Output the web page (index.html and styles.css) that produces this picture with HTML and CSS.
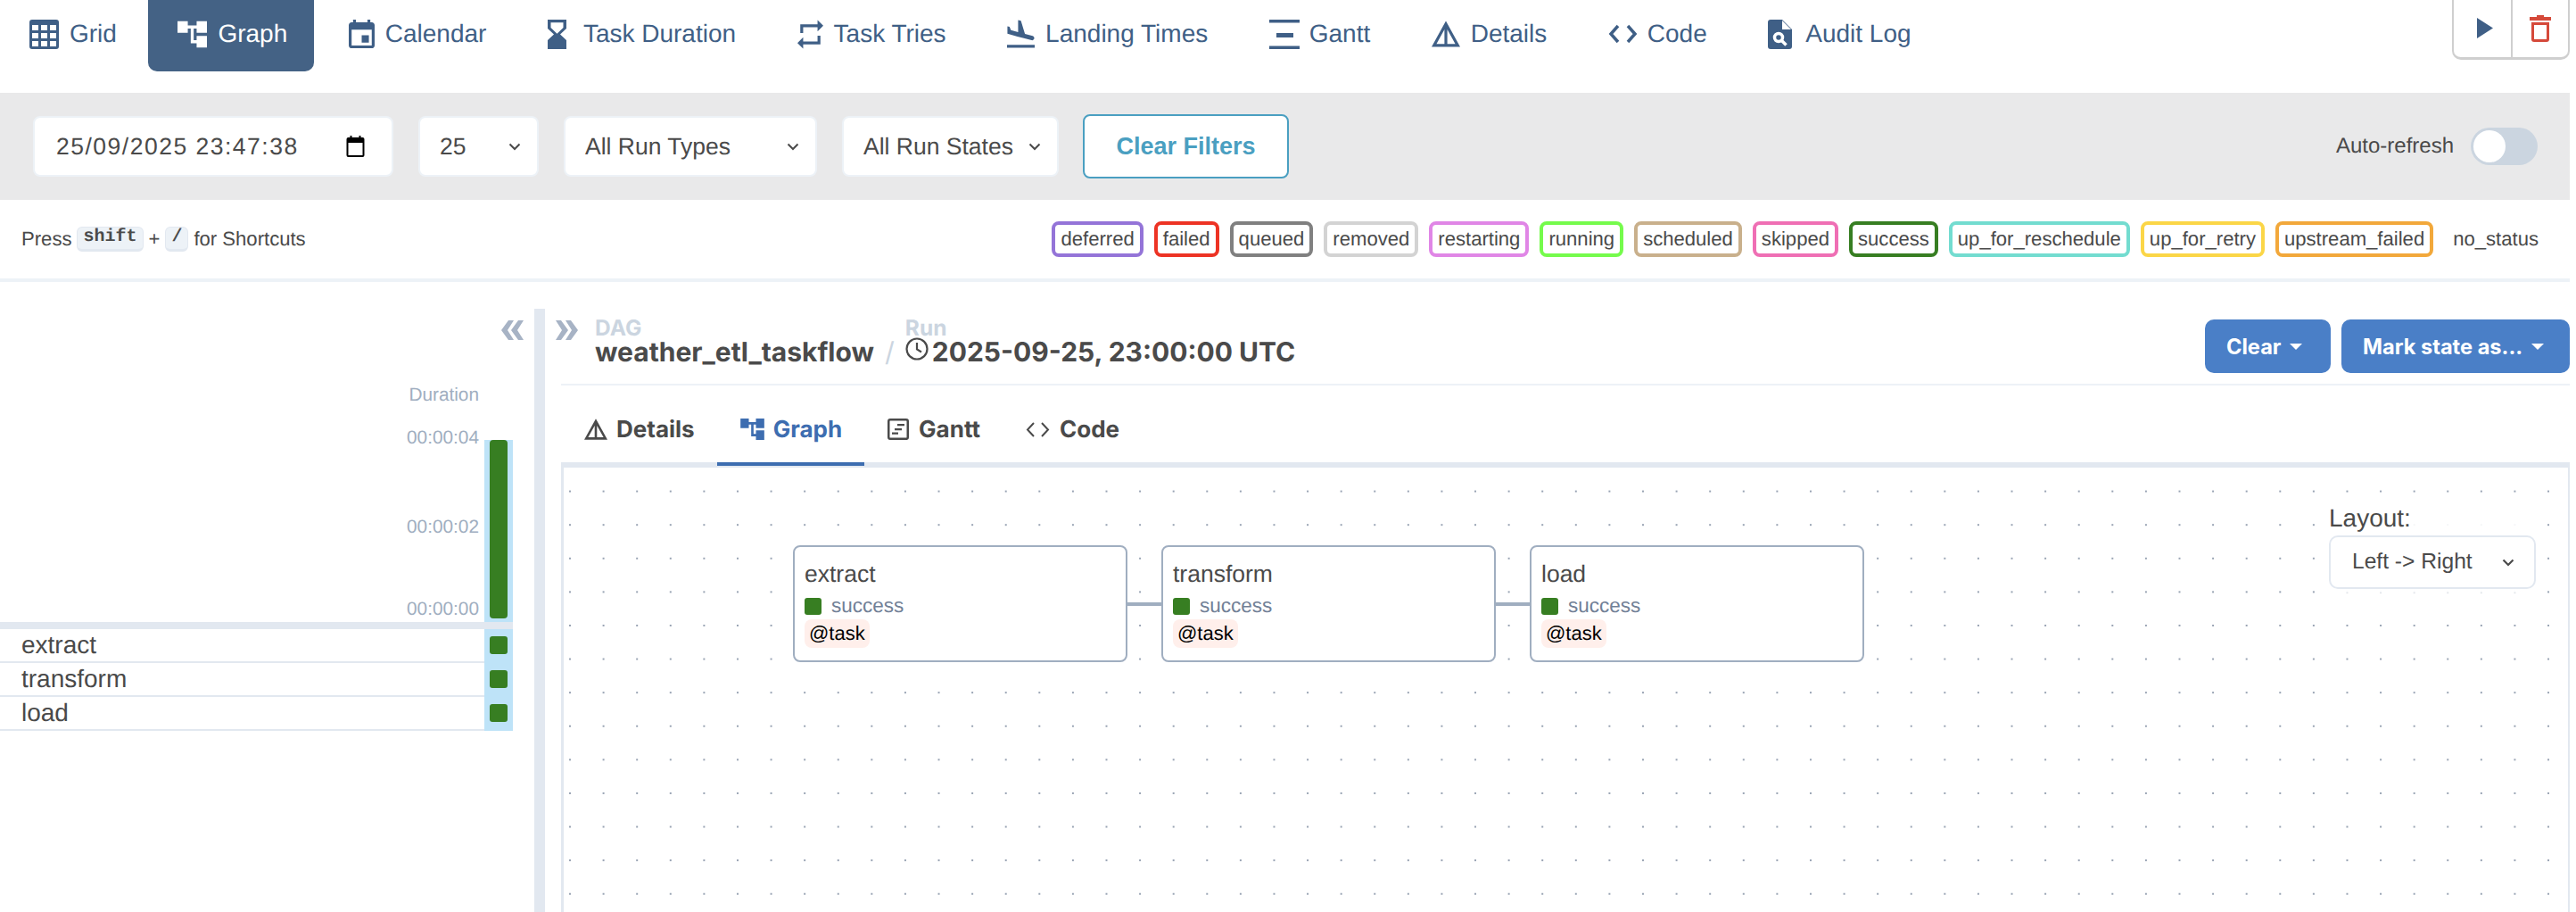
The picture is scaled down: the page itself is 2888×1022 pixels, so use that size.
FILE: index.html
```html
<!DOCTYPE html>
<html lang="en">
<head>
<meta charset="utf-8">
<title>weather_etl_taskflow - Graph</title>
<link rel="stylesheet" href="styles.css">
</head>
<body>
<header class="topnav">
  <nav class="navlist">
    <a class="navitem"><svg class="ic ic-grid" viewBox="0 0 33 33"><path fill-rule="evenodd" d="M3 0h27a3 3 0 0 1 3 3v27a3 3 0 0 1-3 3H3a3 3 0 0 1-3-3V3a3 3 0 0 1 3-3zM3 6v6h7V6zm10 0v6h7V6zm10 0v6h7V6zM3 15v6h7v-6zm10 0v6h7v-6zm10 0v6h7v-6zM3 24v6h7v-6zm10 0v6h7v-6zm10 0v6h7v-6z"/></svg>Grid</a>
    <a class="navitem active"><svg class="ic ic-graph" viewBox="2 3 20 18"><path d="M22 11V3h-7v3H9V3H2v8h7V8h2v10h4v3h7v-8h-7v3h-2V8h2v3z"/></svg>Graph</a>
    <a class="navitem"><svg class="ic ic-cal" viewBox="3 1 18 20"><path d="M17 12h-5v5h5v-5zM16 1v2H8V1H6v2H5c-1.11 0-1.99.9-1.99 2L3 19c0 1.1.89 2 2 2h14c1.1 0 2-.9 2-2V5c0-1.1-.9-2-2-2h-1V1h-2zm3 18H5V8h14v11z"/></svg>Calendar</a>
    <a class="navitem"><svg class="ic ic-hour" viewBox="6 2 12 20" preserveAspectRatio="none"><path d="M18 22l-.01-6L14 12l3.99-4.01L18 2H6v6l4 4-4 3.99V22h12zM8 7.5V4h8v3.5l-4 4-4-4z"/></svg>Task Duration</a>
    <a class="navitem"><svg class="ic ic-rep" viewBox="3 2 18 20"><path d="M7 7h10v3l4-4-4-4v3H5v6h2V7zm10 10H7v-3l-4 4 4 4v-3h12v-6h-2v4z"/></svg>Task Tries</a>
    <a class="navitem"><svg class="ic ic-land" viewBox="2.5 2 19 19"><path d="M2.5 19h19v2h-19zm7.18-5.73l4.35 1.16 5.31 1.42c.8.21 1.62-.26 1.84-1.06.21-.8-.26-1.62-1.06-1.84l-5.31-1.42-2.76-9.02L10.12 2v8.28L5.15 8.95l-.93-2.32-1.45-.39v5.17l1.6.43 5.31 1.43z"/></svg>Landing Times</a>
    <a class="navitem"><svg class="ic ic-gantt" viewBox="0 0 34 33"><path d="M0 0h34v3.500H0zM8 15h19v5H8zM0 29.500h34V33H0z"/></svg>Gantt</a>
    <a class="navitem"><svg class="ic ic-det" viewBox="2 3 20 18"><path d="M12 3L2 21h20L12 3zm1 5.920L18.600 19H13V8.920zm-2 0V19H5.400L11 8.920z"/></svg>Details</a>
    <a class="navitem"><svg class="ic ic-code" viewBox="0 0 33 22"><path d="M11 2L3 11l8 9M22 2l8 9-8 9"/></svg>Code</a>
    <a class="navitem"><svg class="ic ic-audit" viewBox="0 0 27 33"><path d="M3 0h13l11 11v19a3 3 0 0 1-3 3H3a3 3 0 0 1-3-3V3a3 3 0 0 1 3-3z"/><path class="ic-cut" d="M16 1v10h10z"/><circle class="ic-ring" cx="12" cy="20" r="4.500"/><path class="ic-ring" d="M15.500 23.500l5 5"/></svg>Audit Log</a>
  </nav>
  <div class="actions">
    <button class="action"><svg class="ic-play" viewBox="0 0 18 23"><path d="M0 0l18 11.500L0 23z"/></svg></button>
    <button class="action"><svg class="ic-trash" viewBox="0 0 24 30"><path d="M8 0h8v2h8v4H0V2h8zM2 8h20v19a3 3 0 0 1-3 3H5a3 3 0 0 1-3-3zm3 3v15.500a.5.5 0 0 0 .5.500h13a.5.5 0 0 0 .5-.500V11z" fill-rule="evenodd"/></svg></button>
  </div>
</header>

<section class="filters">
  <div class="field f-date"><span class="datetext">25/09/2025 23:47:38</span><svg class="ic-picker" viewBox="0 0 20 24"><path fill-rule="evenodd" d="M4 0h2v2h8V0h2v2h2a2 2 0 0 1 2 2v18a2 2 0 0 1-2 2H2a2 2 0 0 1-2-2V4a2 2 0 0 1 2-2h2zM2 8v14h16V8z"/></svg></div>
  <div class="field f-num"><span>25</span><svg class="chev" viewBox="0 0 14 9"><path d="M1.500 1.500L7 7l5.500-5.500"/></svg></div>
  <div class="field f-types"><span>All Run Types</span><svg class="chev" viewBox="0 0 14 9"><path d="M1.500 1.500L7 7l5.500-5.500"/></svg></div>
  <div class="field f-states"><span>All Run States</span><svg class="chev" viewBox="0 0 14 9"><path d="M1.500 1.500L7 7l5.500-5.500"/></svg></div>
  <button class="clearfilters">Clear Filters</button>
  <div class="autorefresh"><span>Auto-refresh</span><span class="toggle"><span class="knob"></span></span></div>
</section>

<section class="legendbar">
  <div class="hint">Press <kbd>shift</kbd> + <kbd>/</kbd> for Shortcuts</div>
  <div class="legend">
    <span class="pill s-deferred">deferred</span>
    <span class="pill s-failed">failed</span>
    <span class="pill s-queued">queued</span>
    <span class="pill s-removed">removed</span>
    <span class="pill s-restarting">restarting</span>
    <span class="pill s-running">running</span>
    <span class="pill s-scheduled">scheduled</span>
    <span class="pill s-skipped">skipped</span>
    <span class="pill s-success">success</span>
    <span class="pill s-reschedule">up_for_reschedule</span>
    <span class="pill s-retry">up_for_retry</span>
    <span class="pill s-upstream">upstream_failed</span>
    <span class="pill s-none">no_status</span>
  </div>
</section>

<main class="content">
  <aside class="gridpanel">
    <div class="collapse"><svg class="dbl" viewBox="0 0 25 22"><path d="M14 0H8L0 11l8 11h6L7 11zM25 0h-6l-8 11 8 11h6l-7-11z"/></svg></div>
    <div class="chart">
      <div class="axis">
        <span class="axis-title">Duration</span>
        <span class="tick t4">00:00:04</span>
        <span class="tick t2">00:00:02</span>
        <span class="tick t0">00:00:00</span>
      </div>
      <div class="barcol"><div class="bar"></div></div>
    </div>
    <div class="sep"></div>
    <div class="row"><span class="rowname">extract</span><span class="rowcell"><i class="sq"></i></span></div>
    <div class="row"><span class="rowname">transform</span><span class="rowcell"><i class="sq"></i></span></div>
    <div class="row"><span class="rowname">load</span><span class="rowcell"><i class="sq"></i></span></div>
  </aside>
  <div class="divider"></div>
  <div class="detail">
    <div class="dagheader">
      <svg class="dbl dbl-r" viewBox="0 0 25 22"><path d="M0 0h6l8 11-8 11H0l7-11zM11 0h6l8 11-8 11h-6l7-11z"/></svg>
      <div class="crumb">
        <div class="crumblabel">DAG</div>
        <div class="crumbvalue">weather_etl_taskflow</div>
      </div>
      <span class="slash">/</span>
      <div class="crumb">
        <div class="crumblabel">Run</div>
        <div class="crumbvalue runvalue"><svg class="ic-clock" viewBox="0 0 26 26"><circle cx="13" cy="13" r="11.500"/><path d="M13 6v7.500l5 3"/></svg>2025-09-25, 23:00:00 UTC</div>
      </div>
      <div class="headbtns">
        <button class="primary b-clear">Clear<i class="caret"></i></button>
        <button class="primary b-mark">Mark state as...<i class="caret"></i></button>
      </div>
    </div>
    <div class="tabs">
      <a class="tab"><svg class="ti ti-det" viewBox="2 3 20 18"><path d="M12 3L2 21h20L12 3zm1 5.920L18.600 19H13V8.920zm-2 0V19H5.400L11 8.920z"/></svg>Details</a>
      <a class="tab on"><svg class="ti ti-graph" viewBox="2 3 20 18"><path d="M22 11V3h-7v3H9V3H2v8h7V8h2v10h4v3h7v-8h-7v3h-2V8h2v3z"/></svg>Graph</a>
      <a class="tab"><svg class="ti ti-gantt" viewBox="0 0 24 24"><path fill-rule="evenodd" d="M3 0h18a3 3 0 0 1 3 3v18a3 3 0 0 1-3 3H3a3 3 0 0 1-3-3V3a3 3 0 0 1 3-3zm0 2.500a.5.5 0 0 0-.5.500v18a.5.5 0 0 0 .5.500h18a.5.5 0 0 0 .5-.500V3a.5.5 0 0 0-.5-.500zM11 6h8v2.200h-8zM8 11h8v2.200H8zM5 15.500h7v2.200H5z"/></svg>Gantt</a>
      <a class="tab"><svg class="ti ti-code" viewBox="0 0 27 17"><path d="M9 1L2 8.500 9 16M18 1l7 7.500L18 16"/></svg>Code</a>
    </div>
    <div class="canvas">
      <div class="node n-extract">
        <div class="nodename">extract</div>
        <div class="nodestate"><i class="dot"></i>success</div>
        <span class="op">@task</span>
      </div>
      <div class="edge e-1"></div>
      <div class="node n-transform">
        <div class="nodename">transform</div>
        <div class="nodestate"><i class="dot"></i>success</div>
        <span class="op">@task</span>
      </div>
      <div class="edge e-2"></div>
      <div class="node n-load">
        <div class="nodename">load</div>
        <div class="nodestate"><i class="dot"></i>success</div>
        <span class="op">@task</span>
      </div>
      <div class="layoutbox">
        <div class="layoutlabel">Layout:</div>
        <div class="layoutselect"><span>Left -&gt; Right</span><svg class="chev chev-l" viewBox="0 0 14 9"><path d="M1.500 1.500L7 7l5.500-5.500"/></svg></div>
      </div>
    </div>
  </div>
</main>
</body>
</html>
```
FILE: styles.css
```css
* { box-sizing: border-box; }
html, body { margin: 0; height: 1022px; overflow: hidden; background: #fff; }
body { font-family: "Liberation Sans", Arial, sans-serif; color: #4a4a4a; display: flex; flex-direction: column; padding-right: 7px; text-rendering: geometricPrecision; }
button { font-family: inherit; cursor: pointer; }

.topnav { height: 104px; flex: none; display: flex; justify-content: space-between; align-items: flex-start; }
.navlist { display: flex; gap: 5.500px; }
.navitem { height: 80px; display: flex; align-items: center; padding: 0 30px 4px 33px; font-size: 28px; color: #3f5f86; border-radius: 0 0 10px 10px; white-space: nowrap; }
.navitem.active { background: #446285; color: #fff; }
.ic { fill: currentColor; flex: none; margin-right: 12px; }
.ic-grid, .ic-graph { width: 33px; height: 33px; }
.ic-graph { height: 31px; }
.ic-cal { width: 29px; height: 34px; }
.ic-hour { width: 21px; height: 33px; margin-right: 19px; }
.ic-rep { width: 29px; height: 33px; }
.ic-land { width: 31px; height: 32px; }
.ic-gantt { width: 34px; height: 33px; margin-right: 11px; }
.ic-det { width: 32px; height: 30px; }
.ic-code { width: 33px; height: 22px; margin-right: 11px; fill: none; stroke: currentColor; stroke-width: 3.500px; }
.ic-audit { width: 27px; height: 33px; margin-right: 15px; }
.ic-cut { fill: #fff; }
.ic-ring { fill: none; stroke: #fff; stroke-width: 3.500px; }

.actions { display: flex; margin: -4px 0 0 0; height: 71px; border: 2px solid #cfcfcf; border-bottom-width: 3px; border-radius: 0 0 10px 10px; background: #fff; }
.action { width: 64px; border: 0; background: none; padding: 0; display: flex; align-items: flex-start; justify-content: center; }
.action + .action { border-left: 2px solid #cfcfcf; }
.ic-play { width: 18px; height: 23px; margin: 22px 0 0 6px; fill: #3f5f86; }
.ic-trash { width: 24px; height: 30px; margin-top: 19px; fill: #d5493a; }

.filters { height: 120px; flex: none; background: #e9e9ea; display: flex; align-items: center; padding: 0 36px 0 37px; gap: 28px; }
.field { height: 68px; background: #fff; border: 2px solid #edf2f7; border-radius: 8px; display: flex; align-items: center; justify-content: space-between; font-size: 26.500px; padding: 0 18px 0 22px; white-space: nowrap; }
.f-date { width: 404px; padding-left: 24px; }
.f-num { width: 135px; }
.f-types { width: 284px; }
.f-states { width: 243px; }
.datetext { letter-spacing: 1.500px; }
.ic-picker { width: 21px; height: 24px; fill: #000; margin-right: 12px; }
.chev { width: 14px; height: 9px; fill: none; stroke: #4a4a4a; stroke-width: 2px; }
.clearfilters { height: 72px; width: 231px; margin-left: -1px; background: #fff; border: 2px solid #4a9fc1; border-radius: 8px; color: #4a9fc1; font-size: 27px; font-weight: 700; padding: 0; }
.autorefresh { margin-left: auto; display: flex; align-items: center; gap: 19px; font-size: 24px; }
.toggle { width: 75px; height: 42px; border-radius: 21px; background: #cbd5e0; padding: 3px; display: block; }
.knob { display: block; width: 36px; height: 36px; border-radius: 50%; background: #fff; }

.legendbar { height: 92px; flex: none; border-bottom: 4px solid #edf2f7; display: flex; align-items: center; justify-content: space-between; padding: 0 25px 0 24px; font-size: 22.100px; }
.hint { white-space: nowrap; display: flex; align-items: center; gap: 6px; }
kbd { font-family: "Liberation Mono", monospace; font-weight: 700; font-size: 20px; background: #edf2f7; border: 1px solid #e2e8f0; border-bottom-width: 3px; border-radius: 6px; padding: 0 6px; height: 28px; line-height: 22px; display: inline-block; }
.legend { display: flex; gap: 12px; }
.pill { height: 40px; border: 4px solid; border-radius: 8px; padding: 0 6px; line-height: 31px; white-space: nowrap; }
.s-deferred { border-color: #9474d8; }
.s-failed { border-color: #ed3324; }
.s-queued { border-color: #808080; }
.s-removed { border-color: #d3d3d3; }
.s-restarting { border-color: #e086e6; }
.s-running { border-color: #75fb4c; }
.s-scheduled { border-color: #c9b08c; }
.s-skipped { border-color: #ef6fb4; }
.s-success { border-color: #377e22; }
.s-reschedule { border-color: #73dcd0; }
.s-retry { border-color: #fbd647; }
.s-upstream { border-color: #f2a83b; }
.s-none { border-color: transparent; }

.content { flex: 1; display: flex; min-height: 0; padding-top: 30px; }
.gridpanel { width: 599px; flex: none; }
.collapse { height: 40px; padding: 13px 12px 0 0; display: flex; justify-content: flex-end; }
.dbl { width: 25px; height: 22px; fill: #a7b3c5; flex: none; }
.chart { width: 575px; height: 311px; display: flex; justify-content: flex-end; align-items: flex-end; }
.axis { display: flex; flex-direction: column; align-items: flex-end; padding: 0 6px 2px 0; font-size: 20.800px; line-height: 24px; color: #a0aec0; }
.tick { display: block; }
.t4 { margin-top: 24px; }
.t2 { margin-top: 76px; }
.t0 { margin-top: 68px; }
.barcol { width: 32px; height: 204px; background: #bee3f8; padding: 0 6px; }
.bar { height: 200px; background: #377e22; border-radius: 4px; }
.sep { width: 575px; height: 8px; background: #e2e8f0; }
.row { width: 575px; height: 38px; display: flex; }
.rowname { flex: 1; height: 38px; border-bottom: 2px solid #e2e8f0; padding-left: 24px; font-size: 28px; line-height: 35px; }
.rowcell { width: 32px; background: #bee3f8; padding: 8px 6px 0; }
.sq { display: block; width: 20px; height: 20px; background: #377e22; border-radius: 3px; }

.divider { width: 12px; flex: none; background: #e2e8f0; }
.detail { flex: 1; min-width: 0; padding: 0 0 0 18px; display: flex; flex-direction: column; }
.dagheader { height: 86px; flex: none; border-bottom: 2px solid #edf2f7; display: flex; align-items: flex-start; }
.dbl-r { margin: 13px 19px 0 -6px; }
.crumb { margin-top: 9px; white-space: nowrap; font-family: Inter, "Liberation Sans", sans-serif; }
.crumblabel { font-size: 24.500px; line-height: 24px; font-weight: 700; color: #cbd5e0; }
.crumbvalue { font-size: 30px; line-height: 38px; font-weight: 700; margin-top: -3px; }
.slash { font-family: Inter, "Liberation Sans", sans-serif; font-size: 30px; line-height: 38px; margin: 30px 12px 0 12px; color: #cbd5e0; }
.runvalue { display: flex; align-items: flex-start; gap: 4px; }
.ic-clock { width: 26px; height: 26px; fill: none; stroke: #4a4a4a; stroke-width: 2.200px; margin-top: 2px; flex: none; }
.headbtns { margin: 12px 0 0 auto; display: flex; gap: 12px; }
.primary { height: 60px; background: #4a7fc7; color: #fff; border: 0; border-radius: 10px; font-family: Inter, "Liberation Sans", sans-serif; font-size: 23.600px; font-weight: 700; display: flex; align-items: center; justify-content: flex-start; padding: 0 0 0 24px; gap: 10px; }
.b-clear { width: 141px; }
.b-mark { width: 256px; }
.caret { width: 0; height: 0; border: 7px solid transparent; border-top: 7px solid #fff; border-bottom: 0; }

.tabs { height: 92px; flex: none; display: flex; border-bottom: 6px solid #e2e8f0; }
.tab { height: 90px; padding: 12px 25px 0 26px; display: flex; align-items: center; font-family: Inter, "Liberation Sans", sans-serif; font-size: 26px; font-weight: 700; border-bottom: 4px solid transparent; white-space: nowrap; }
.tab.on { color: #3d6db0; border-bottom-color: #3d6db0; }
.ti { fill: currentColor; flex: none; margin-right: 10px; }
.ti-det { width: 26px; height: 24px; }
.ti-graph { width: 27px; height: 24px; }
.ti-gantt { width: 24px; height: 24px; margin-right: 11px; }
.ti-code { width: 27px; height: 17px; margin-right: 11px; fill: none; stroke: currentColor; stroke-width: 2px; }

.canvas { flex: 1; position: relative; border-left: 3px solid #e2e8f0; border-right: 2px solid #e2e8f0; background-image: radial-gradient(circle, #98a3b3 1.100px, transparent 1.500px); background-size: 37.600px 37.600px; background-position: -11.800px 7.800px; }
.node { position: absolute; top: 87px; width: 375px; height: 131px; background: #fff; border: 2px solid #a0aec0; border-radius: 8px; padding: 0 11px; }
.n-extract { left: 257px; }
.n-transform { left: 670px; }
.n-load { left: 1083px; }
.nodename { font-size: 26.500px; line-height: 36px; margin-top: 12px; }
.nodestate { font-size: 22.500px; line-height: 24px; color: #718096; display: flex; align-items: center; gap: 11px; margin-top: 6px; }
.dot { width: 19px; height: 19px; background: #377e22; border-radius: 3px; flex: none; }
.op { display: block; width: fit-content; margin-top: 3px; height: 32px; line-height: 31px; padding: 0 5px; background: #ffefeb; border-radius: 8px; color: #000; font-size: 22px; }
.edge { position: absolute; top: 151px; height: 4px; background: #a0aec0; }
.e-1 { left: 632px; width: 38px; }
.e-2 { left: 1045px; width: 38px; }
.layoutbox { position: absolute; left: 1979px; top: 38px; width: 232px; height: 102px; background: rgba(255, 255, 255, 0.9); }
.layoutlabel { font-size: 28px; line-height: 38px; }
.layoutselect { height: 60px; background: #fff; border: 2px solid #e2e8f0; border-radius: 10px; display: flex; align-items: center; justify-content: space-between; padding: 0 22px 0 24px; font-size: 24.600px; }
.chev-l { stroke-width: 2.200px; }
```
